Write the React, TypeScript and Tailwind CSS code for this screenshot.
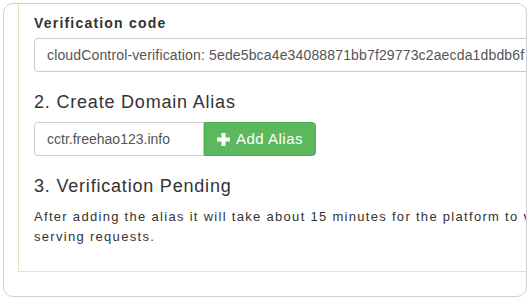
export default function App() {
  return (
    <div className="w-[530px] h-[300px] bg-white pt-[3px] pl-[3px] font-['Liberation_Sans',Arial,sans-serif] text-[#333]">
      <div className="w-[524px] h-[294px] border border-[#cfcfd6] rounded-[10px] overflow-hidden">
        <div className="ml-[14px] w-[900px] h-[268px] border-l border-b border-[#d6e9c6] pl-[15px] pt-[9px]">
          <label className="block text-[14px] leading-[20px] font-bold tracking-[1.2px]">Verification code</label>
          <div className="mt-[5px] h-[34px] w-[560px] border border-[#ccc] rounded-[4px] px-[12px] flex items-center text-[14px] text-[#555] tracking-[0.15px] whitespace-nowrap overflow-hidden">
            cloudControl-verification: 5ede5bca4e34088871bb7f29773c2aecda1dbdb6f
          </div>
          <h4 className="mt-[20px] text-[18px] leading-[20px] tracking-[0.8px] font-normal">2. Create Domain Alias</h4>
          <div className="mt-[10px] flex">
            <div className="h-[34px] w-[170px] border border-[#ccc] rounded-l-[4px] px-[12px] flex items-center text-[14px] text-[#555]">
              cctr.freehao123.info
            </div>
            <button className="h-[34px] px-[12px] bg-[#5cb85c] border border-[#4cae4c] rounded-r-[4px] text-white text-[15px] flex items-center gap-[6px] tracking-[0.5px]">
              <svg width="13" height="13" viewBox="0 0 13 13">
                <path d="M4.5 0h4v4.5h4.5v4h-4.5v4.5h-4v-4.5h-4.5v-4h4.5z" fill="#fff" />
              </svg>
              Add Alias
            </button>
          </div>
          <h4 className="mt-[20px] text-[18px] leading-[20px] tracking-[0.8px] font-normal">3. Verification Pending</h4>
          <p className="mt-[11px] w-[712px] text-[13px] leading-[20px] tracking-[1.3px]">
            After adding the alias it will take about 15 minutes for the platform to verify the domain and start serving requests.
          </p>
        </div>
      </div>
    </div>
  );
}
